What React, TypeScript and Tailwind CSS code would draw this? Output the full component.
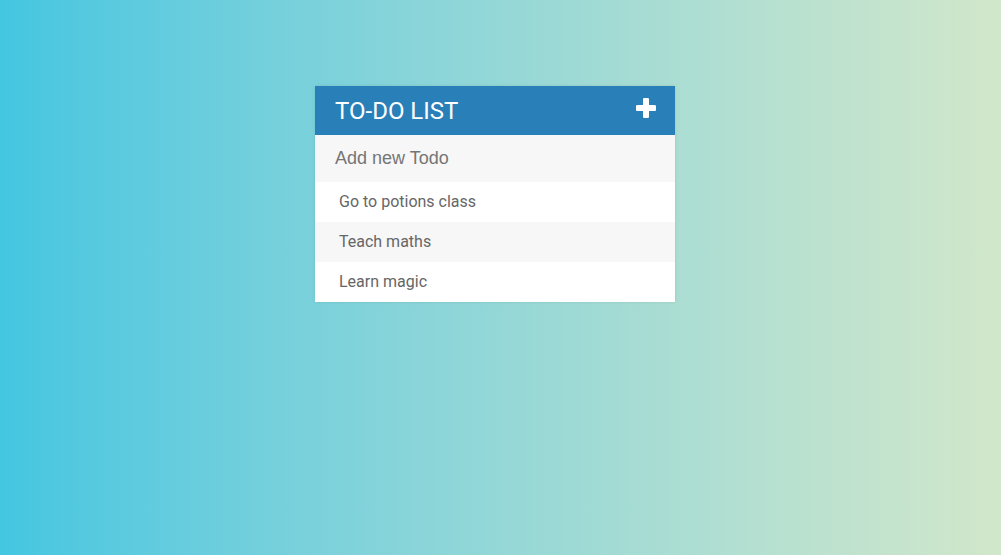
import React from 'react';

const todos = ['Go to potions class', 'Teach maths', 'Learn magic'];

const App: React.FC = () => {
  return (
    <div className="min-h-[555px] w-full bg-gradient-to-r from-[#43c6e1] to-[#d1e7ca] pr-[11px] pt-[86px] font-['Roboto',sans-serif]">
      <div className="mx-auto w-[360px] shadow-[0_0_3px_rgba(0,0,0,0.1)]">
        <h1 className="flex h-[49px] items-center justify-between bg-[#2980b9] pl-5 pr-[19px] text-[24px] font-normal uppercase text-white">
          <span>To-Do List</span>
          <svg width="20" height="20" viewBox="0 0 20 20" className="-mt-[5px]">
            <path d="M10 2v16M2 10h16" stroke="white" strokeWidth="6" strokeLinecap="round" />
          </svg>
        </h1>
        <input
          type="text"
          placeholder="Add new Todo"
          className="block h-[47px] w-full bg-[#f7f7f7] pl-5 font-['Liberation_Sans',Arial,sans-serif] text-[18px] text-[#666] outline-none placeholder:text-[#757575]"
        />
        <ul>
          {todos.map((t, i) => (
            <li
              key={t}
              className={`h-10 pl-6 text-[16px] leading-10 text-[#666] ${i % 2 === 1 ? 'bg-[#f7f7f7]' : 'bg-white'}`}
            >
              {t}
            </li>
          ))}
        </ul>
      </div>
    </div>
  );
};

export default App;
